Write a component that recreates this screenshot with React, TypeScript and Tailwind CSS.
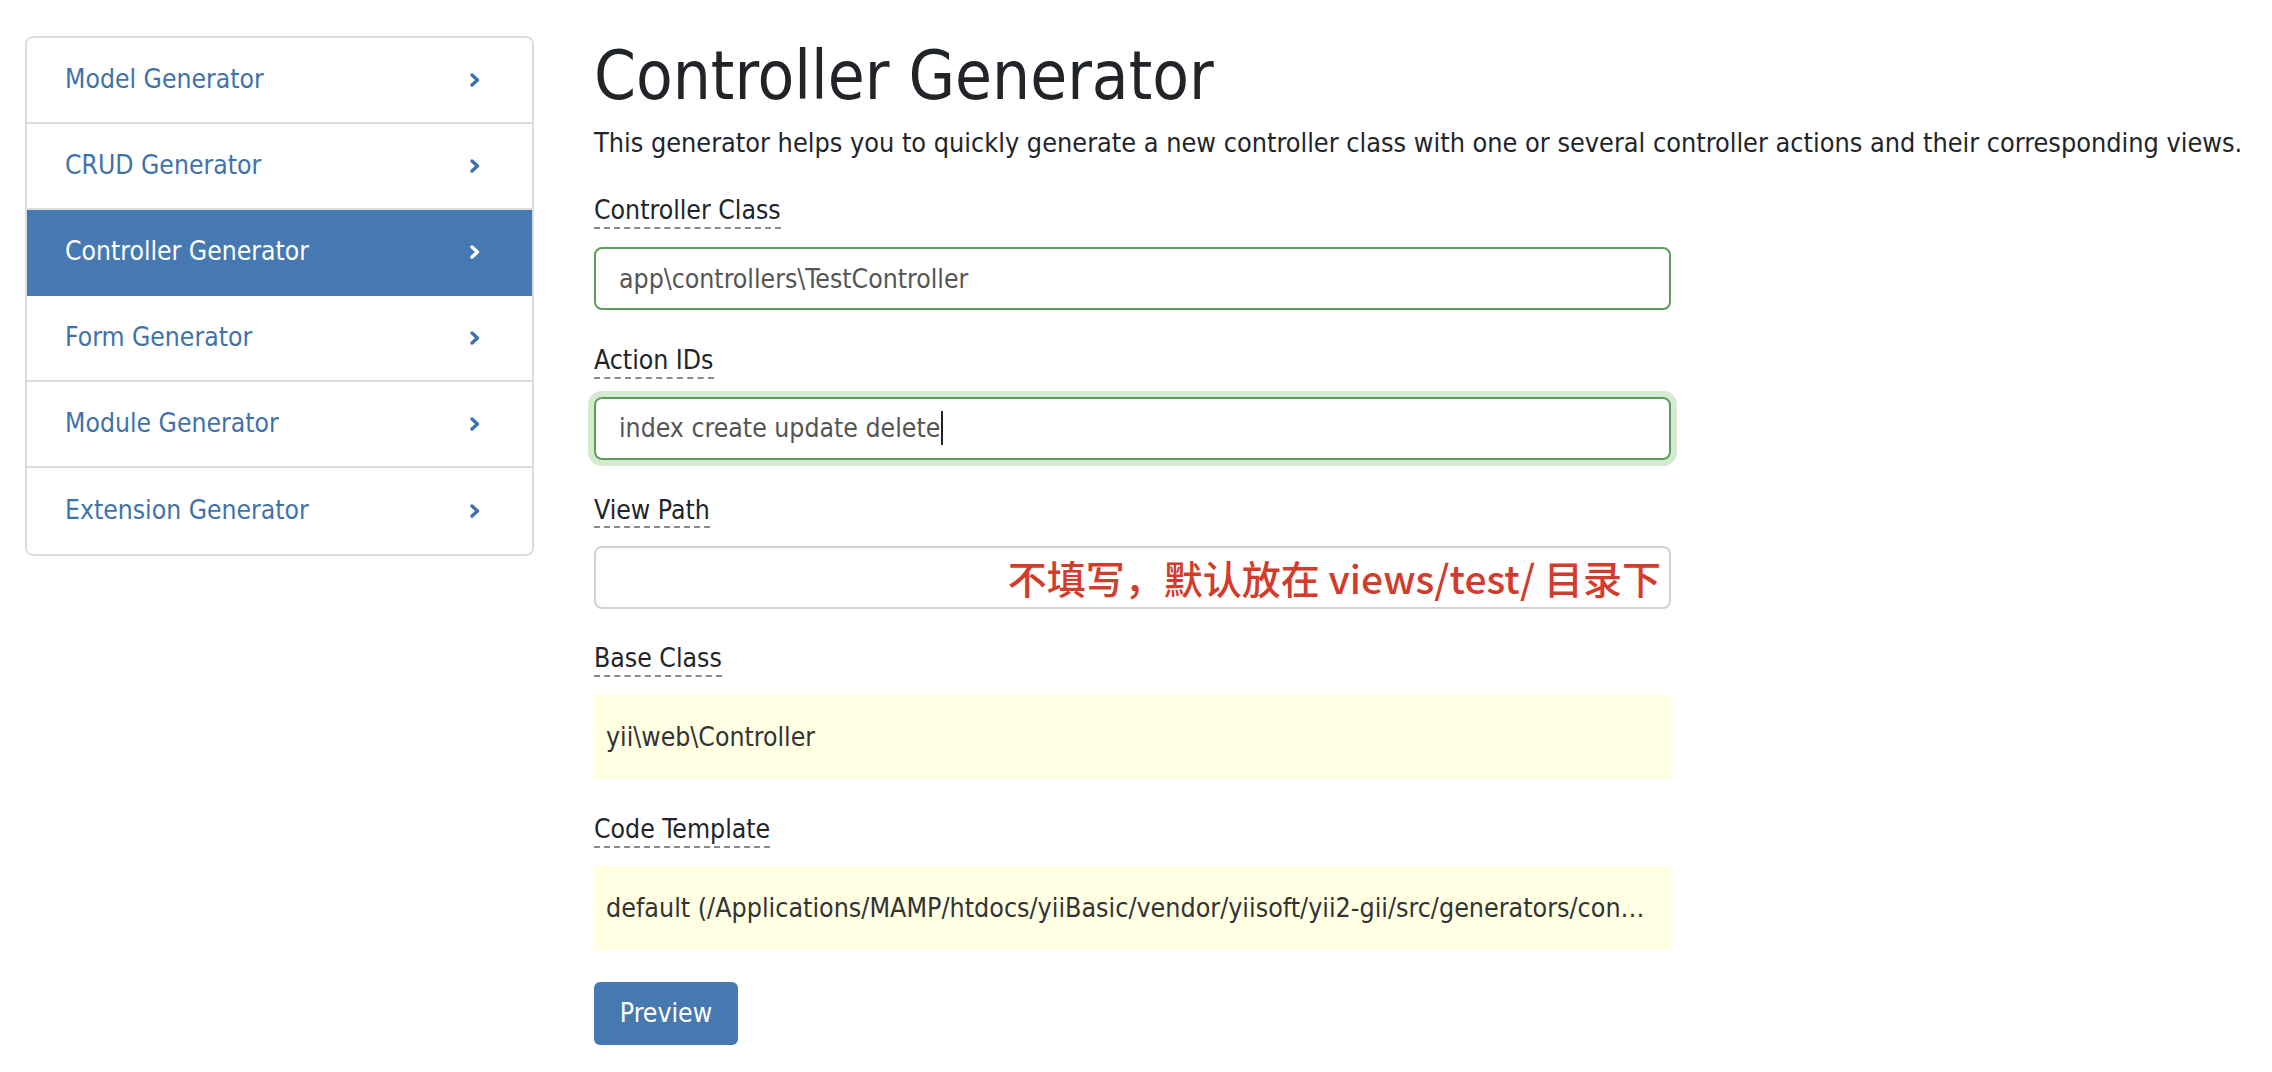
import React from "react";

const navItems = [
  "Model Generator",
  "CRUD Generator",
  "Controller Generator",
  "Form Generator",
  "Module Generator",
  "Extension Generator",
];

function Chevron() {
  return (
    <svg width="12" height="16" viewBox="0 0 12 16" fill="none">
      <path d="M3 3 L8.5 8 L3 13" stroke="currentColor" strokeWidth="3.4" strokeLinecap="round" strokeLinejoin="round" />
    </svg>
  );
}

function FieldLabel({ children }: { children: React.ReactNode }) {
  return (
    <div>
      <span className="inline-block border-b-2 border-dashed border-[#8a8a8a] pb-[1px] text-[26.4px] leading-[1.2] text-[#212529]">
        {children}
      </span>
    </div>
  );
}

export default function App() {
  return (
    <div className="flex min-h-[1072px] w-[2272px] bg-white pl-[25px] pt-[36px] font-['DejaVu_Sans_Condensed','DejaVu_Sans',sans-serif] [font-stretch:condensed]">
      {/* sidebar */}
      <div className="w-[509px] shrink-0 self-start overflow-hidden rounded-[8px] border-2 border-[#dddddd]">
        {navItems.map((item, i) => {
          const active = item === "Controller Generator";
          return (
            <div
              key={item}
              className={
                "flex h-[86px] items-center justify-between pl-[38px] pr-[51px] text-[26.3px] " +
                (i < navItems.length - 1 ? "border-b-2 " : "") +
                (active
                  ? "border-[#4679b2] bg-[#4679b2] text-white"
                  : "border-[#dddddd] bg-white text-[#3f72aa]")
              }
            >
              <span>{item}</span>
              <Chevron />
            </div>
          );
        })}
      </div>

      {/* main */}
      <div className="ml-[60px] w-[1077px] shrink-0">
        <h1 className="text-[66.8px] leading-[1.2] text-[#212529]">Controller Generator</h1>
        <p className="mt-[7px] whitespace-nowrap text-[26.8px] leading-[1.5] text-[#212529]">
          This generator helps you to quickly generate a new controller class with one or several controller actions and their corresponding views.
        </p>

        <div className="mt-[31px]">
          <FieldLabel>Controller Class</FieldLabel>
          <div className="mt-[18px] flex h-[63px] items-center rounded-[8px] border-2 border-[#5a9e5a] pl-[23px] text-[26.4px] text-[#555555]">
            app\controllers\TestController
          </div>
        </div>

        <div className="mt-[34px]">
          <FieldLabel>Action IDs</FieldLabel>
          <div className="mt-[18px] flex h-[63px] items-center rounded-[8px] border-2 border-[#5a9e5a] pl-[23px] text-[26.4px] text-[#555555] shadow-[0_0_0_6px_#d5ead1]">
            index create update delete
            <span className="ml-[1px] inline-block h-[34px] w-[2px] bg-[#222222]" />
          </div>
        </div>

        <div className="mt-[34px]">
          <FieldLabel>View Path</FieldLabel>
          <div className="mt-[18px] flex h-[63px] items-center justify-end rounded-[8px] border-2 border-[#cfd3d6] pr-[8px]">
            <span className="font-['Noto_Sans_CJK_SC',sans-serif] text-[39px] font-medium leading-none text-[#d23c2c] [font-stretch:normal]">
              不填写，默认放在 views/test/ 目录下
            </span>
          </div>
        </div>

        <div className="mt-[33px]">
          <FieldLabel>Base Class</FieldLabel>
          <div className="mt-[18px] flex h-[84px] items-center bg-[#ffffe3] px-[12px] text-[26.4px] text-[#333333]">
            yii\web\Controller
          </div>
        </div>

        <div className="mt-[34px]">
          <FieldLabel>Code Template</FieldLabel>
          <div className="mt-[18px] flex h-[84px] items-center bg-[#ffffe3] pl-[12px] pr-[20px] text-[26.6px] text-[#333333]">
            <span className="truncate">
              default (/Applications/MAMP/htdocs/yiiBasic/vendor/yiisoft/yii2-gii/src/generators/controller/default)
            </span>
          </div>
        </div>

        <button className="mt-[32px] h-[63px] w-[144px] rounded-[6px] bg-[#4679b2] text-[26.4px] text-white">
          Preview
        </button>
      </div>
    </div>
  );
}
